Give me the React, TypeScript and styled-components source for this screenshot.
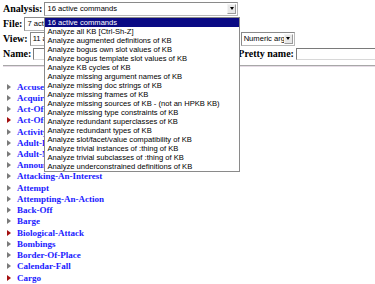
import React from 'react'
import styled, { createGlobalStyle } from 'styled-components'

const GlobalStyle = createGlobalStyle`
    html, body {
        margin: 0;
        padding: 0;
        background: #ffffff;
        overflow: hidden;
        font-family: 'Liberation Serif', 'Times New Roman', serif;
    }
`

const Page = styled.div`
    padding: 1px 0 0 3px;
    width: 372px;
    height: 283px;
    overflow: hidden;
`

const Row = styled.div`
    position: relative;
    display: flex;
    align-items: center;
    height: 15px;
    gap: 2px;
`

const Label = styled.span<{ $gap?: number }>`
    font-size: 10px;
    font-weight: bold;
    color: #000000;
    white-space: nowrap;
    margin-left: ${(p) => p.$gap || 0}px;
`

const SelectBox = styled.div<{ $width: number }>`
    position: relative;
    box-sizing: border-box;
    width: ${(p) => p.$width}px;
    height: 14px;
    display: flex;
    align-items: center;
    border: 1px solid #8a8a8a;
    border-right-color: #b8b8b8;
    border-bottom-color: #b8b8b8;
    background: #ffffff;
    flex-shrink: 0;
`

const SelectValue = styled.span`
    flex: 1;
    padding-left: 2px;
    font-family: 'Liberation Sans', Arial, sans-serif;
    font-size: 7.6px;
    color: #000000;
    white-space: nowrap;
    overflow: hidden;
`

const ArrowButton = styled.span`
    box-sizing: border-box;
    width: 9px;
    height: 10px;
    margin-right: 1px;
    display: flex;
    align-items: center;
    justify-content: center;
    background: #e8e8e8;
    border: 1px solid #9a9a9a;
    border-top-color: #f4f4f4;
    border-left-color: #f4f4f4;

    &::after {
        content: '';
        border-top: 3px solid #000000;
        border-left: 2.5px solid transparent;
        border-right: 2.5px solid transparent;
    }
`

const TextInput = styled.div<{ $width: number }>`
    box-sizing: border-box;
    height: 12px;
    width: ${(p) => p.$width}px;
    flex: 0 0 auto;
    border: 1px solid #7a7a7a;
    border-right-color: #d8d8d8;
    border-bottom-color: #d8d8d8;
    background: #ffffff;
`

const DropList = styled.ul`
    position: absolute;
    top: 14px;
    left: -1px;
    z-index: 5;
    box-sizing: border-box;
    width: 196px;
    margin: 0;
    padding: 0;
    list-style: none;
    background: #ffffff;
    border: 1px solid #8a8a8a;
`

const DropItem = styled.li<{ $active?: boolean }>`
    height: 9px;
    line-height: 9px;
    padding-left: 2px;
    font-family: 'Liberation Sans', Arial, sans-serif;
    font-size: 7.6px;
    white-space: nowrap;
    overflow: hidden;
    color: ${(p) => (p.$active ? '#ffffff' : '#000000')};
    background: ${(p) => (p.$active ? '#0a0a84' : 'transparent')};
`

const Rule = styled.div`
    margin: 4px 0 0 0;
    border-top: 1px solid #a8a8a8;
    border-bottom: 1px solid #e6dce6;
`

const Tree = styled.ul`
    margin: 14px 0 0 0;
    padding: 0 0 0 4px;
    list-style: none;
`

const TreeItem = styled.li`
    display: flex;
    align-items: center;
    height: 11.24px;
    gap: 6px;
`

const Twisty = styled.span<{ $red?: boolean }>`
    width: 0;
    height: 0;
    border-left: 4px solid ${(p) => (p.$red ? '#a31010' : '#7a7a7a')};
    border-top: 3.5px solid transparent;
    border-bottom: 3.5px solid transparent;
`

const FrameLink = styled.a`
    font-size: 9px;
    font-weight: bold;
    color: #1a1aff;
    text-decoration: none;
    white-space: nowrap;
`

const commands = [
    'Analyze all KB [Ctrl-Sh-Z]',
    'Analyze augmented definitions of KB',
    'Analyze bogus own slot values of KB',
    'Analyze bogus template slot values of KB',
    'Analyze KB cycles of KB',
    'Analyze missing argument names of KB',
    'Analyze missing doc strings of KB',
    'Analyze missing frames of KB',
    'Analyze missing sources of KB - (not an HPKB KB)',
    'Analyze missing type constraints of KB',
    'Analyze redundant superclasses of KB',
    'Analyze redundant types of KB',
    'Analyze slot/facet/value compatibility of KB',
    'Analyze trivial instances of :thing of KB',
    'Analyze trivial subclasses of :thing of KB',
    'Analyze underconstrained definitions of KB',
]

const frames: { name: string; red?: boolean }[] = [
    { name: 'Accuse' },
    { name: 'Acquire-Possession' },
    { name: 'Act-Of-Terrorism' },
    { name: 'Act-Of-War', red: true },
    { name: 'Activity' },
    { name: 'Adult-Female-Person' },
    { name: 'Adult-Male-Person' },
    { name: 'Announce' },
    { name: 'Attacking-An-Interest' },
    { name: 'Attempt' },
    { name: 'Attempting-An-Action' },
    { name: 'Back-Off' },
    { name: 'Barge' },
    { name: 'Biological-Attack', red: true },
    { name: 'Bombings' },
    { name: 'Border-Of-Place' },
    { name: 'Calendar-Fall' },
    { name: 'Cargo', red: true },
]

const App: React.FC = () => {
    return (
        <>
            <GlobalStyle />
            <Page>
                <Row style={{ zIndex: 2 }}>
                    <Label>Analysis:</Label>
                    <SelectBox $width={194}>
                        <SelectValue>16 active commands</SelectValue>
                        <ArrowButton />
                        <DropList>
                            <DropItem $active>16 active commands</DropItem>
                            {commands.map((c) => (
                                <DropItem key={c}>{c}</DropItem>
                            ))}
                        </DropList>
                    </SelectBox>
                </Row>
                <Row>
                    <Label>File:</Label>
                    <SelectBox $width={200}>
                        <SelectValue>7 active commands</SelectValue>
                        <ArrowButton />
                    </SelectBox>
                </Row>
                <Row>
                    <Label>View:</Label>
                    <SelectBox $width={209}>
                        <SelectValue>11 active commands</SelectValue>
                        <ArrowButton />
                    </SelectBox>
                    <SelectBox $width={54}>
                        <SelectValue>Numeric arg</SelectValue>
                        <ArrowButton />
                    </SelectBox>
                </Row>
                <Row>
                    <Label>Name:</Label>
                    <TextInput $width={200} />
                    <Label $gap={3}>Pretty name:</Label>
                    <TextInput $width={110} />
                </Row>
                <Rule />
                <Tree>
                    {frames.map((f) => (
                        <TreeItem key={f.name}>
                            <Twisty $red={f.red} />
                            <FrameLink href="#">{f.name}</FrameLink>
                        </TreeItem>
                    ))}
                </Tree>
            </Page>
        </>
    )
}

export default App
